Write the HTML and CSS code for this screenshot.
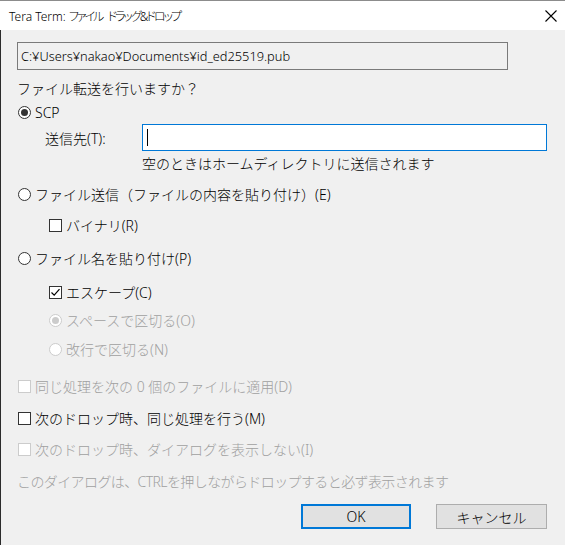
FILE: index.html
```html
<!DOCTYPE html>
<html lang="ja">
<head>
    <meta charset="UTF-8">
    <title>Tera Term: ファイル ドラッグ&amp;ドロップ</title>
    <link rel="stylesheet" href="styles.css">
</head>
<body>
    <div class="window">
        <div class="titlebar">
            <span class="title">Tera Term: <span class="title-ja">ファイル ドラッグ&amp;ドロップ</span></span>
            <svg class="close" width="12" height="12" viewBox="0 0 12 12">
                <path d="M0.5 0.5 L11.5 11.5 M11.5 0.5 L0.5 11.5" stroke="#000" stroke-width="1.1" fill="none"/>
            </svg>
        </div>

        <div class="dialog">
            <div class="path-box">C:¥Users¥nakao¥Documents¥id_ed25519.pub</div>

            <div class="row question">ファイル転送を行いますか？</div>

            <!-- SCP で送る -->
            <div class="row opt sp-4"><span class="radio checked"></span>SCP</div>
            <div class="dest-row">
                <span class="dest-label">送信先(T):</span>
                <div class="dest-input"><span class="caret"></span></div>
            </div>
            <div class="row hint">空のときはホームディレクトリに送信されます</div>

            <!-- 内容を貼り付け -->
            <div class="row opt sp-11"><span class="radio"></span>ファイル送信（ファイルの内容を貼り付け）(E)</div>
            <div class="row opt indent sp-11"><span class="check"></span>バイナリ(R)</div>

            <!-- ファイル名を貼り付け -->
            <div class="row opt sp-13"><span class="radio"></span>ファイル名を貼り付け(P)</div>
            <div class="row opt indent sp-14">
                <span class="check checked">
                    <svg width="11" height="11" viewBox="0 0 11 11"><path d="M1.5 5.5 L4.2 8.2 L9.5 2.2" stroke="#000" stroke-width="1.2" fill="none"/></svg>
                </span>エスケープ(C)
            </div>
            <div class="row opt indent sp-8 disabled"><span class="radio checked"></span>スペースで区切る(O)</div>
            <div class="row opt indent sp-9 disabled"><span class="radio"></span>改行で区切る(N)</div>

            <div class="row opt sp-17 disabled"><span class="check"></span>同じ処理を次の 0 個のファイルに適用(D)</div>
            <div class="row opt sp-12"><span class="check"></span>次のドロップ時、同じ処理を行う(M)</div>
            <div class="row opt sp-11 disabled"><span class="check"></span>次のドロップ時、ダイアログを表示しない(I)</div>

            <div class="row note sp-12">このダイアログは、CTRLを押しながらドロップすると必ず表示されます</div>

            <div class="buttons">
                <button class="btn default">OK</button>
                <button class="btn">キャンセル</button>
            </div>
        </div>
    </div>
</body>
</html>
```

FILE: styles.css
```css
* {
    box-sizing: border-box;
}

body {
    margin: 0;
    width: 565px;
    height: 545px;
    overflow: hidden;
    font-family: "Noto Sans", "Noto Sans CJK JP", sans-serif;
    font-weight: 300;
    color: #000;
    background-color: #f0f0f0;
}

.window {
    width: 565px;
    height: 545px;
    display: flex;
    flex-direction: column;
}

.titlebar {
    height: 30px;
    flex: none;
    display: flex;
    align-items: center;
    justify-content: space-between;
    padding: 0 8px 0 9px;
    background-color: #fff;
    border-top: 1px solid #8c8c8c;
    font-size: 12px;
}

.title {
    white-space: pre;
}

.title-ja {
    font-feature-settings: "palt";
    letter-spacing: -2px;
    word-spacing: 4px;
}

.close {
    margin-top: 1px;
}

.dialog {
    flex: 1;
    display: flex;
    flex-direction: column;
    padding: 12px 18px 0 16px;
    border-left: 1px solid #2b2b2b;
    font-size: 14px;
}

.path-box {
    width: 491px;
    height: 28px;
    display: flex;
    align-items: center;
    padding-left: 3px;
    border: 1px solid #7a7a7a;
    font-size: 12.8px;
}

.row {
    height: 20px;
    display: flex;
    align-items: center;
    white-space: nowrap;
}

.question {
    margin-top: 8px;
}

.sp-4 { margin-top: 4px; }
.sp-8 { margin-top: 8px; }
.sp-9 { margin-top: 9px; }
.sp-11 { margin-top: 11px; }
.sp-12 { margin-top: 12px; }
.sp-13 { margin-top: 13px; }
.sp-14 { margin-top: 14px; }
.sp-17 { margin-top: 17px; }

.opt {
    padding-left: 1px;
}

.indent {
    padding-left: 32px;
}

/* ラジオボタン */
.radio {
    width: 13px;
    height: 13px;
    flex: none;
    margin-right: 4px;
    border: 1px solid #333;
    border-radius: 50%;
    background-color: #fff;
    display: flex;
    align-items: center;
    justify-content: center;
}

.radio.checked::after {
    content: "";
    width: 7px;
    height: 7px;
    border-radius: 50%;
    background-color: #333;
}

/* チェックボックス */
.check {
    width: 13px;
    height: 13px;
    flex: none;
    margin-right: 4px;
    border: 1px solid #333;
    background-color: #fff;
    display: flex;
    align-items: center;
    justify-content: center;
}

.disabled {
    color: #a0a0a0;
}

.disabled .radio,
.disabled .check {
    border-color: #cccccc;
}

.disabled .radio.checked::after {
    background-color: #cccccc;
}

.dest-row {
    margin-top: 2px;
    height: 27px;
    display: flex;
    align-items: center;
    padding-left: 28px;
}

.dest-label {
    width: 97px;
}

.dest-input {
    width: 407px;
    height: 27px;
    border: 1px solid #0078d7;
    background-color: #fff;
    display: flex;
    align-items: center;
    padding-left: 4px;
}

.caret {
    width: 1px;
    height: 17px;
    background-color: #000;
}

.hint {
    margin-top: 2px;
    padding-left: 125px;
}

.note {
    color: #a0a0a0;
    letter-spacing: -0.6px;
}

.buttons {
    margin-top: 13px;
    display: flex;
    justify-content: flex-end;
    gap: 25px;
}

.btn {
    width: 111px;
    height: 25px;
    padding: 0;
    font-family: inherit;
    font-weight: inherit;
    font-size: 14px;
    color: #000;
    background-color: #e1e1e1;
    border: 1px solid #adadad;
}

.btn.default {
    width: 110px;
    border: 2px solid #0078d7;
}
```
